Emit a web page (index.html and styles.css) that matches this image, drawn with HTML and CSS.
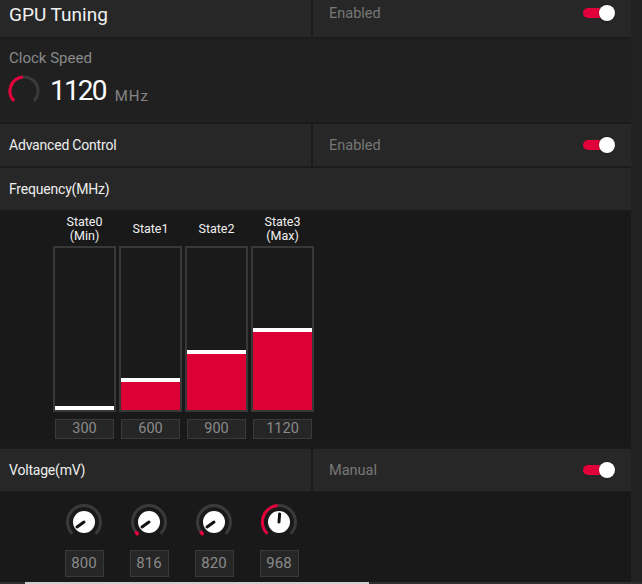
FILE: index.html
```html
<!DOCTYPE html>
<html lang="en">
<head>
<meta charset="utf-8">
<title>GPU Tuning</title>
<link rel="stylesheet" href="styles.css">
</head>
<body>
<div class="app">
  <div class="main">
    <div class="row row-top">
      <div class="cell cell-left"><span class="title">GPU Tuning</span></div>
      <div class="cell cell-right"><span class="status">Enabled</span><span class="toggle"><span class="track"></span><span class="thumb"></span></span></div>
    </div>

    <div class="clock">
      <div class="clock-label">Clock Speed</div>
      <div class="clock-value">
        <svg class="gauge" width="34" height="34" viewBox="0 0 34 34">
          <path d="M7.1 26.9 A14 14 0 1 1 26.9 26.9" fill="none" stroke="#3a3a3a" stroke-width="3"/>
          <path d="M7.1 26.9 A14 14 0 0 1 15.8 3.05" fill="none" stroke="#e4003a" stroke-width="3"/>
        </svg>
        <span class="big">1120</span><span class="unit">MHz</span>
      </div>
    </div>

    <div class="row">
      <div class="cell cell-left"><span class="label">Advanced Control</span></div>
      <div class="cell cell-right"><span class="status">Enabled</span><span class="toggle"><span class="track"></span><span class="thumb"></span></span></div>
    </div>

    <div class="row">
      <div class="cell cell-full"><span class="label">Frequency(MHz)</span></div>
    </div>

    <div class="chart">
      <div class="states">
        <div class="state">
          <div class="state-head">State0<br>(Min)</div>
          <div class="bar"><div class="fill" style="height:0px"></div></div>
          <div class="vbox">300</div>
        </div>
        <div class="state">
          <div class="state-head">State1</div>
          <div class="bar"><div class="fill" style="height:28px"></div></div>
          <div class="vbox">600</div>
        </div>
        <div class="state">
          <div class="state-head">State2</div>
          <div class="bar"><div class="fill" style="height:56px"></div></div>
          <div class="vbox">900</div>
        </div>
        <div class="state">
          <div class="state-head">State3<br>(Max)</div>
          <div class="bar"><div class="fill" style="height:78px"></div></div>
          <div class="vbox">1120</div>
        </div>
      </div>
    </div>

    <div class="row">
      <div class="cell cell-left"><span class="label">Voltage(mV)</span></div>
      <div class="cell cell-right"><span class="status">Manual</span><span class="toggle"><span class="track"></span><span class="thumb"></span></span></div>
    </div>

    <div class="knobs">
      <div class="knob">
        <svg width="40" height="40" viewBox="0 0 40 40">
          <path d="M8.3 31.7 A16.5 16.5 0 1 1 31.7 31.7" fill="none" stroke="#3a3a3a" stroke-width="3"/>
          <circle cx="20" cy="20" r="11" fill="#ffffff"/>
          <line x1="20" y1="20" x2="13" y2="25" stroke="#111" stroke-width="3" stroke-linecap="round"/>
        </svg>
        <div class="kbox">800</div>
      </div>
      <div class="knob">
        <svg width="40" height="40" viewBox="0 0 40 40">
          <path d="M8.3 31.7 A16.5 16.5 0 1 1 31.7 31.7" fill="none" stroke="#3a3a3a" stroke-width="3"/>
          <path d="M8.3 31.7 A16.5 16.5 0 0 1 7.3 30.5" fill="none" stroke="#e4003a" stroke-width="3.5" stroke-linecap="round"/>
          <circle cx="20" cy="20" r="11" fill="#ffffff"/>
          <line x1="20" y1="20" x2="13" y2="25" stroke="#111" stroke-width="3" stroke-linecap="round"/>
        </svg>
        <div class="kbox">816</div>
      </div>
      <div class="knob">
        <svg width="40" height="40" viewBox="0 0 40 40">
          <path d="M8.3 31.7 A16.5 16.5 0 1 1 31.7 31.7" fill="none" stroke="#3a3a3a" stroke-width="3"/>
          <path d="M8.3 31.7 A16.5 16.5 0 0 1 7.3 30.5" fill="none" stroke="#e4003a" stroke-width="3.5" stroke-linecap="round"/>
          <circle cx="20" cy="20" r="11" fill="#ffffff"/>
          <line x1="20" y1="20" x2="13" y2="25" stroke="#111" stroke-width="3" stroke-linecap="round"/>
        </svg>
        <div class="kbox">820</div>
      </div>
      <div class="knob">
        <svg width="40" height="40" viewBox="0 0 40 40">
          <path d="M8.3 31.7 A16.5 16.5 0 1 1 31.7 31.7" fill="none" stroke="#3a3a3a" stroke-width="3"/>
          <path d="M8.3 31.7 A16.5 16.5 0 0 1 18.6 3.56" fill="none" stroke="#e4003a" stroke-width="3"/>
          <circle cx="20" cy="20" r="11" fill="#ffffff"/>
          <line x1="20" y1="20" x2="20.6" y2="12" stroke="#111" stroke-width="3" stroke-linecap="round"/>
        </svg>
        <div class="kbox">968</div>
      </div>
    </div>
  </div>
  <div class="rail"></div>
</div>
<div class="hscroll"><div class="hthumb"></div></div>
</body>
</html>
```

FILE: styles.css
```css
* { box-sizing: border-box; }
html, body {
  margin: 0;
  padding: 0;
  background: #1b1b1b;
  overflow: hidden;
}
body {
  font-family: Roboto, "Noto Sans", "DejaVu Sans", sans-serif;
  font-weight: 400;
  color: #ececec;
  height: 584px;
  display: flex;
  flex-direction: column;
}
.app {
  display: flex;
  flex: 1;
  min-height: 0;
}
.main {
  width: 631px;
  display: flex;
  flex-direction: column;
  gap: 2px;
  background: #1b1b1b;
}
.rail {
  flex: 1;
  background: #222222;
}
.row {
  display: flex;
  height: 42px;
  gap: 2px;
  flex: none;
}
.row-top {
  height: 48px;
  margin-top: -11px;
}
.cell {
  background: #272727;
  display: flex;
  align-items: center;
  padding-left: 9px;
}
.cell-left { width: 311px; }
.cell-right {
  flex: 1;
  padding-left: 16px;
  padding-right: 16px;
  justify-content: space-between;
}
.cell-full { flex: 1; }
.title {
  font-size: 19px;
  color: #f2f2f2;
  margin-top: 2px;
}
.label {
  font-size: 14px;
  letter-spacing: -0.2px;
  color: #eeeeee;
}
.status {
  font-size: 14.5px;
  color: #777777;
}
.toggle {
  position: relative;
  width: 32px;
  height: 16px;
  display: inline-block;
}
.track {
  position: absolute;
  left: 0;
  top: 3px;
  width: 24px;
  height: 10px;
  border-radius: 5px;
  background: #e2003a;
}
.thumb {
  position: absolute;
  left: 16px;
  top: 0;
  width: 16px;
  height: 16px;
  border-radius: 50%;
  background: #ffffff;
  box-shadow: 0 0 2px rgba(0,0,0,0.5);
}
.clock {
  height: 83px;
  background: #202020;
  padding: 9px 0 0 9px;
  flex: none;
}
.clock-label {
  font-size: 15px;
  color: #8a8a8a;
  line-height: 20px;
}
.clock-value {
  display: flex;
  align-items: center;
  margin-top: 6px;
  margin-left: -2px;
}
.gauge { flex: none; }
.big {
  font-size: 28px;
  letter-spacing: -1.8px;
  color: #ffffff;
  margin-left: 9px;
  line-height: 34px;
}
.unit {
  font-size: 15px;
  letter-spacing: 1px;
  color: #858585;
  margin-left: 9px;
  margin-top: 9px;
}
.chart {
  height: 235px;
  background: #191919;
  padding: 2px 0 0 53px;
  flex: none;
}
.states {
  display: flex;
  gap: 3px;
}
.state {
  width: 63px;
  display: flex;
  flex-direction: column;
  align-items: center;
}
.state-head {
  height: 30px;
  display: flex;
  align-items: center;
  justify-content: center;
  text-align: center;
  font-size: 12.5px;
  line-height: 14px;
  color: #f0f0f0;
  margin-bottom: 2px;
}
.bar {
  width: 63px;
  height: 166px;
  border: 2px solid #383838;
  background: #1a1a1a;
  display: flex;
  flex-direction: column;
  justify-content: flex-end;
}
.fill {
  background: #dc0034;
  border-top: 4px solid #ffffff;
  box-sizing: content-box;
}
.vbox {
  margin-top: 7px;
  width: 59px;
  height: 20px;
  border: 1px solid #3a3a3a;
  background: #262626;
  color: #8a8a8a;
  font-size: 14.5px;
  line-height: 18px;
  text-align: center;
}
.knobs {
  flex: 1;
  background: #191919;
  display: flex;
  gap: 25px;
  padding: 9px 0 0 64px;
}
.knob {
  width: 40px;
  display: flex;
  flex-direction: column;
  align-items: center;
}
.knob svg { display: block; }
.kbox {
  margin-top: 8px;
  width: 39px;
  height: 27px;
  border: 1px solid #3a3a3a;
  background: #262626;
  color: #8a8a8a;
  font-size: 15px;
  line-height: 25px;
  text-align: center;
}
.hscroll {
  height: 2px;
  flex: none;
  background: #2e2e2e;
  display: flex;
}
.hthumb {
  margin-left: 25px;
  width: 344px;
  background: #cfcfcf;
}
```
